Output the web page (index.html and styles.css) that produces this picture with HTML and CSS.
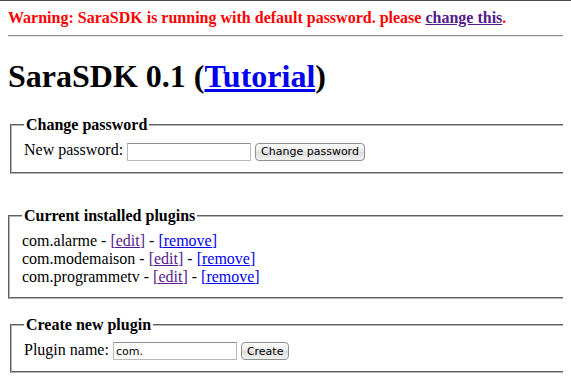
FILE: index.html
```html
<!DOCTYPE html>
<html lang="en">
<head>
  <meta charset="UTF-8" />
  <title>SaraSDK 0.1</title>
  <link rel="stylesheet" href="styles.css">
</head>
<body>
  <div class="page">
    <div class="warning">
      Warning: SaraSDK is running with default password. please <a href="#password" class="visited">change this</a>.
    </div>
    <hr>
    <h1>SaraSDK 0.1 (<a href="#">Tutorial</a>)</h1>

    <form class="block block-form" id="password">
      <fieldset>
        <legend>Change password</legend>
        New password: <input type="password" class="field">
        <button type="button" class="btn">Change password</button>
      </fieldset>
    </form>

    <fieldset class="block block-list">
      <legend>Current installed plugins</legend>
      com.alarme - <a href="#" class="visited">[edit]</a> - <a href="#">[remove]</a><br>
      com.modemaison - <a href="#" class="visited">[edit]</a> - <a href="#">[remove]</a><br>
      com.programmetv - <a href="#" class="visited">[edit]</a> - <a href="#">[remove]</a>
    </fieldset>

    <form class="block">
      <fieldset>
        <legend>Create new plugin</legend>
        Plugin name: <input type="text" class="field" value="com.">
        <button type="button" class="btn">Create</button>
      </fieldset>
    </form>
  </div>
</body>
</html>
```

FILE: styles.css
```css
html {
  border-top: 1px solid #4a4a4a;
  overflow: hidden;
}
body {
  margin: 8px;
  font-family: "Liberation Serif", "Times New Roman", serif;
  font-size: 16px;
  color: #000;
}
.page {
  width: 680px;
}
a {
  color: #0000ee;
}
a.visited {
  color: #551a8b;
}
.warning {
  color: #ff0000;
  font-weight: bold;
}
hr {
  margin: 8px 0;
  border: none;
  border-top: 1px solid #8e8e8e;
  border-bottom: 1px solid #e6e6e6;
}
h1 {
  font-size: 32px;
  margin: 21px 0;
}
fieldset {
  margin: 0 2px;
  padding: 7px 12px 11px;
  border: 2px groove #b4b4b4;
}
legend {
  font-weight: bold;
  padding: 0 2px;
}
.block {
  margin: 0;
}
.block-form {
  margin-bottom: 33px;
}
.block-list {
  margin-bottom: 17px;
}
.field {
  width: 118px;
  height: 14px;
  padding: 1px 2px;
  border: 1px solid #b9b9b9;
  border-top-color: #8f8f8f;
  font-family: "DejaVu Sans", sans-serif;
  font-size: 11px;
  vertical-align: baseline;
}
.btn {
  height: 18px;
  padding: 0 5px;
  border: 1px solid #8f8f8f;
  border-radius: 4px;
  background: linear-gradient(#ffffff, #e8e8e8 50%, #dcdcdc 51%, #f2f2f2);
  font-family: "DejaVu Sans", sans-serif;
  font-size: 11px;
  color: #000;
}
```
